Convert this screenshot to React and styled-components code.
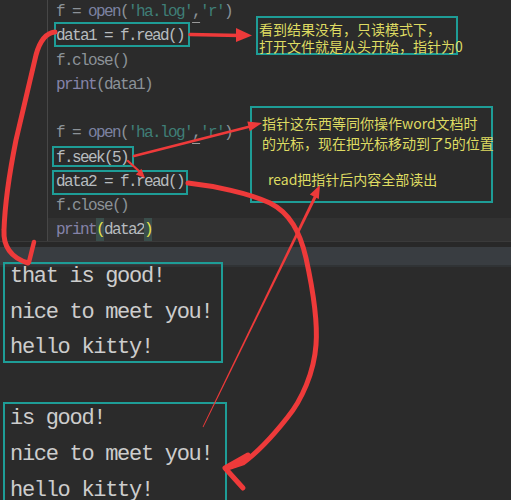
import React from 'react';
import styled, { createGlobalStyle } from 'styled-components';

const Global = createGlobalStyle`
  html, body { margin: 0; padding: 0; background: #2b2b2b; }
  body { width: 511px; height: 500px; overflow: hidden; }
`;

const Page = styled.div`
  position: relative;
  width: 511px;
  height: 500px;
  overflow: hidden;
  background: #2b2b2b;
  display: flex;
  flex-direction: column;
`;

const Editor = styled.div`
  display: flex;
  height: 241px;
  flex-shrink: 0;
  overflow: hidden;
  border-bottom: 1px solid #3a3a3a;
`;

const Gutter = styled.div`
  width: 47px;
  flex-shrink: 0;
  background: #2c2c2c;
  border-right: 1px solid #474747;
`;

const Code = styled.div`
  flex: 1;
  font-family: "Liberation Mono", monospace;
  font-size: 16px;
  letter-spacing: -1.6px;
  white-space: pre;
`;

const Line = styled.div`
  height: 24.25px;
  line-height: 24.25px;
  padding-left: 8px;
  color: ${p => (p.$bright ? '#b7bbbf' : '#8c9298')};
  background: ${p => (p.$current ? '#323232' : 'transparent')};
`;

const Str = styled.span`color: #3f7e77;`;
const Builtin = styled.span`color: ${p => (p.$print ? '#8583a8' : '#7c82a2')};`;
const Warn = styled.span`
  text-decoration: underline;
  text-decoration-color: #9a9a9a;
  text-underline-offset: 6px;
`;
const Brace = styled.span`
  color: #e6e44a;
  background: #3a4e4b;
  display: inline-block;
  height: 24.25px;
`;

const Strip = styled.div`
  height: 5px;
  flex-shrink: 0;
  background: #282828;
`;

const Band = styled.div`
  height: 18px;
  flex-shrink: 0;
  background: #393d41;
  border-bottom: 2px solid #303335;
`;

const Console = styled.div`
  margin-top: -8px;
  padding-left: 10px;
  font-family: "Liberation Mono", monospace;
  font-size: 22px;
  letter-spacing: -1.3px;
  line-height: 35.6px;
  color: #cdcdcd;
  white-space: pre;
`;

const OutLine = styled.div`
  height: 35.6px;
`;

const Frame = styled.div`
  position: absolute;
  left: ${p => p.$x}px;
  top: ${p => p.$y}px;
  width: ${p => p.$w}px;
  height: ${p => p.$h}px;
  box-sizing: border-box;
  border: 2px solid #1e9d97;
  pointer-events: none;
`;

const Note = styled(Frame)`
  padding: ${p => p.$pad};
  font-family: "Noto Sans CJK SC", "Noto Sans", sans-serif;
  font-size: 14px;
  line-height: ${p => p.$lh}px;
  color: #dedb62;
  white-space: nowrap;
`;

const NoteLine = styled.div`
  margin-top: ${p => p.$gap || 0}px;
  padding-left: ${p => p.$indent || 0}px;
`;

const Ink = styled.svg`
  position: absolute;
  left: 0;
  top: 0;
  width: 511px;
  height: 500px;
  pointer-events: none;
`;

const RED = '#ee3a3a';

const Open = () => (
  <Line>
    f = <Builtin>open</Builtin>(<Str>'ha.log'</Str><Warn>,</Warn><Str>'r'</Str>)
  </Line>
);

export default function App() {
  return (
    <>
      <Global />
      <Page>
        <Editor>
          <Gutter />
          <Code>
            <Open />
            <Line $bright>data1 = f.read()</Line>
            <Line>f.close()</Line>
            <Line><Builtin $print>print</Builtin>(data1)</Line>
            <Line> </Line>
            <Open />
            <Line $bright>f.seek(5)</Line>
            <Line $bright>data2 = f.read()</Line>
            <Line>f.close()</Line>
            <Line $current $bright>
              <Builtin $print>print</Builtin><Brace>(</Brace>data2<Brace>)</Brace>
            </Line>
          </Code>
        </Editor>
        <Strip />
        <Band />
        <Console>
          <OutLine>that is good!</OutLine>
          <OutLine>nice to meet you!</OutLine>
          <OutLine>hello kitty!</OutLine>
          <OutLine> </OutLine>
          <OutLine>is good!</OutLine>
          <OutLine>nice to meet you!</OutLine>
          <OutLine>hello kitty!</OutLine>
        </Console>

        <Frame $x={54} $y={22} $w={136} $h={25} />
        <Frame $x={52} $y={146} $w={82} $h={21} />
        <Frame $x={52} $y={170} $w={136} $h={25} />
        <Frame $x={3} $y={262} $w={220} $h={101} />
        <Frame $x={3} $y={402} $w={224} $h={100} />

        <Note $x={256} $y={16} $w={202} $h={39} $pad="3px 0 0 1px" $lh={17}>
          <NoteLine>看到结果没有，只读模式下，</NoteLine>
          <NoteLine>打开文件就是从头开始，指针为0</NoteLine>
        </Note>
        <Note $x={250} $y={106} $w={243} $h={97} $pad="5px 0 0 10px" $lh={20}>
          <NoteLine>指针这东西等同你操作word文档时</NoteLine>
          <NoteLine>的光标，现在把光标移动到了5的位置</NoteLine>
          <NoteLine $gap={16} $indent={6}>read把指针后内容全部读出</NoteLine>
        </Note>

        <Ink viewBox="0 0 511 500">
          <g fill="none" stroke={RED} strokeLinecap="round" strokeLinejoin="round">
            <path d="M190 34.5 L240 35.5" strokeWidth="3.5" />
            <path d="M55 32 C46 33 40 40 36 55 C30 80 22 115 16 140 C10 170 5 200 4 230 C3 248 12 258 28 263" strokeWidth="5" />
            <path d="M34 242 L29 262" strokeWidth="4.5" />
            <path d="M134 156 L252 126" strokeWidth="2.5" />
            <path d="M128 161 L140 172" strokeWidth="2.2" />
            <path d="M188 183 C215 186 248 193 270 203 C290 213 300 232 306 258 C313 290 318 320 316 345 C314 372 302 400 287 418 C272 437 258 452 243 463 L228 468" strokeWidth="5" />
            <path d="M248 455 L225 468 L243 488" strokeWidth="5" />
          </g>
          <g fill={RED}>
            <polygon points="236,28 252,35.5 236,42" />
            <polygon points="262,123 249.7,131.2 247.3,121.5" />
            <polygon points="145,178 135.8,174.4 141.4,168.8" />
            <polygon points="315.65,192.34 318.35,193.66 203.36,427.18 202.64,426.82" />
            <polygon points="320,185 318.8,198.9 309.8,194.5" />
          </g>
        </Ink>
      </Page>
    </>
  );
}
